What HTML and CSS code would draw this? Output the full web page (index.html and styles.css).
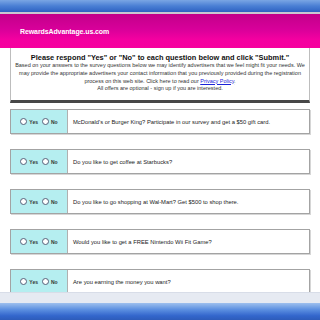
FILE: index.html
```html
<!DOCTYPE html>
<html>

<head lang="en">
    <meta charset="UTF-8">
    <meta name="viewport" content="width=device-width, initial-scale=1.0">
    <title>RewardsAdvantage.us.com</title>
    <link rel="stylesheet" href="styles.css">
</head>

<body>
    <div class="topbar"></div>
    <div class="header">
        <span class="logo">RewardsAdvantage.us.com</span>
    </div>

    <div class="main">
        <div class="intro">
            <h1>Please respond "Yes" or "No" to each question below and click "Submit."</h1>
            <p>Based on your answers to the survey questions below we may identify advertisers that we feel might fit your needs. We
                may provide the appropriate advertisers your contact information that you previously provided during the registration
                process on this web site. Click here to read our <a href="#">Privacy Policy</a>.<br>
                All offers are optional - sign up if you are interested.</p>
        </div>

        <div class="question">
            <div class="answer">
                <label><span class="radio"></span>Yes</label>
                <label><span class="radio"></span>No</label>
            </div>
            <div class="text">McDonald's or Burger King? Participate in our survey and get a $50 gift card.</div>
        </div>
        <div class="question">
            <div class="answer">
                <label><span class="radio"></span>Yes</label>
                <label><span class="radio"></span>No</label>
            </div>
            <div class="text">Do you like to get coffee at Starbucks?</div>
        </div>
        <div class="question">
            <div class="answer">
                <label><span class="radio"></span>Yes</label>
                <label><span class="radio"></span>No</label>
            </div>
            <div class="text">Do you like to go shopping at Wal-Mart? Get $500 to shop there.</div>
        </div>
        <div class="question">
            <div class="answer">
                <label><span class="radio"></span>Yes</label>
                <label><span class="radio"></span>No</label>
            </div>
            <div class="text">Would you like to get a FREE Nintendo Wii Fit Game?</div>
        </div>
        <div class="question">
            <div class="answer">
                <label><span class="radio"></span>Yes</label>
                <label><span class="radio"></span>No</label>
            </div>
            <div class="text">Are you earning the money you want?</div>
        </div>
    </div>

    <!-- browser bar over the bottom of the page -->
    <div class="bottombar">
        <div class="band"></div>
        <div class="blue"></div>
    </div>
</body>

</html>
```

FILE: styles.css
```css
* {
    margin: 0;
    padding: 0;
}

body {
    background-color: #fff;
    font-family: "Liberation Sans", Arial, sans-serif;
    color: #222;
    overflow: hidden;
}

.topbar {
    height: 12px;
    background: linear-gradient(#7aa6e4, #4a7fd4 50%, #2e62c2);
    border-bottom: 2px solid #c9c9d2;
}

.header {
    height: 34px;
    background: linear-gradient(#c2008a, #d8009a 45%, #f400a0 75%, #f6009e);
    display: flex;
    align-items: center;
    padding-left: 20px;
}

.logo {
    color: #fff;
    font-size: 7px;
    font-weight: bold;
    letter-spacing: -0.1px;
}

.main {
    padding: 0 10px;
}

.intro {
    border-left: 1px solid #bdbdbd;
    border-right: 1px solid #bdbdbd;
    border-bottom: 3px solid #474747;
    text-align: center;
    padding-top: 5px;
    box-sizing: border-box;
    height: 55px;
}

.intro h1 {
    font-size: 7.4px;
    font-weight: bold;
    color: #111;
    line-height: 9px;
}

.intro p {
    font-size: 5.5px;
    line-height: 7.8px;
    color: #333;
    padding: 0 1px;
}

.intro a {
    color: #1a22d8;
}

.question {
    display: flex;
    height: 25px;
    margin-bottom: 15px;
    border: 1px solid #a3a3a3;
    box-shadow: 1px 1px 0 #d6d6d6;
    box-sizing: border-box;
}

.intro + .question {
    margin-top: 6px;
}

.answer {
    width: 56px;
    background-color: #b5eef0;
    border-right: 1px solid #b0b0b0;
    display: flex;
    align-items: center;
    justify-content: center;
    gap: 4px;
}

.answer label {
    display: flex;
    align-items: center;
    font-size: 5px;
    font-weight: bold;
    color: #333;
}

.radio {
    width: 5px;
    height: 5px;
    border: 1px solid #55607a;
    border-radius: 50%;
    background-color: #fff;
    margin-right: 2px;
}

.text {
    flex: 1;
    display: flex;
    align-items: center;
    padding-left: 5px;
    font-size: 5.8px;
    color: #222;
}

.bottombar {
    position: fixed;
    left: 0;
    right: 0;
    bottom: 0;
}

.bottombar .band {
    height: 10px;
    background: #e6eaf2;
    border-top: 1px solid #d8dde8;
}

.bottombar .blue {
    height: 17px;
    background: linear-gradient(#9ec0ee, #5a8ee0 40%, #3366cc 75%, #2d5cba);
}
```
